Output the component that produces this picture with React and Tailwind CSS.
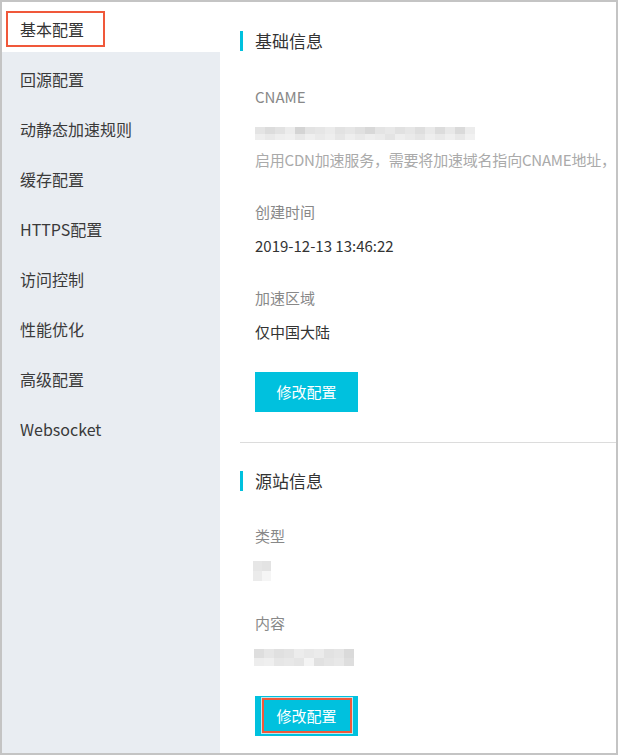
import React from 'react';

const menu = ['基本配置', '回源配置', '动静态加速规则', '缓存配置', 'HTTPS配置', '访问控制', '性能优化', '高级配置', 'Websocket'];

// mosaic placeholder for the masked values
const cname = [
  ['#e4e4e4', '#dcdcdc', '#e2e2e2', '#ececec', '#d4d4d4', '#e3e3e3', '#e6e6e6', '#ebebeb', '#e2e2e2', '#e6e6e6', '#e0e0e0', '#d8d8d8', '#e4e4e4', '#e8e8e8', '#e1e1e1', '#e6e6e6', '#dedede', '#e9e9e9', '#dcdcdc', '#e8e8e8', '#dadada', '#ececec'],
  ['#eeeeee', '#e9e9e9', '#eeeeee', '#f0f0f0', '#e8e8e8', '#efefef', '#eaeaea', '#eeeeee', '#e6e6e6', '#eeeeee', '#e9e9e9', '#eeeeee', '#ebebeb', '#e4e4e4', '#eeeeee', '#eaeaea', '#e5e5e5', '#eeeeee', '#e9e9e9', '#efefef', '#e8e8e8', '#f1f1f1'],
];
const kind = [
  ['#e6e6e6', '#e3e3e3'],
  ['#ebebeb', '#f5f5f5'],
];
const content = [
  ['#dedede', '#e6e6e6', '#e0e0e0', '#e3e3e3', '#ececec', '#e8e8e8', '#ebebeb', '#e2e2e2', '#e5e5e5', '#dadada'],
  ['#ededed', '#efefef', '#e6e6e6', '#e8e8e8', '#e5e5e5', '#f4f4f4', '#e1e1e1', '#e5e5e5', '#e8e8e8', '#dedede'],
];

const Mosaic = ({ rows, cell, rowH }) => (
  <div className="flex flex-col">
    {rows.map((r, i) => (
      <div key={i} className="flex">
        {r.map((c, j) => (
          <div key={j} style={{ width: cell, height: rowH[i], background: c }} />
        ))}
      </div>
    ))}
  </div>
);

const SectionTitle = ({ children, className }) => (
  <div className={'flex items-center h-[20px] ' + className}>
    <div className="w-[3px] h-[20px] bg-[#00c1de]" />
    <span className="ml-[12px] text-[17px] leading-[20px] text-[#333]">{children}</span>
  </div>
);

const Label = ({ children, className }) => (
  <div className={'pl-[15px] text-[15px] leading-[20px] text-[#888] ' + className}>{children}</div>
);

const Value = ({ children, className }) => (
  <div className={'pl-[15px] text-[15px] leading-[20px] text-[#333] ' + className}>{children}</div>
);

export default function App() {
  return (
    <div
      className="w-[618px] h-[755px] flex border-2 border-[#c4c4c4] bg-white overflow-hidden"
      style={{ fontFamily: '"Noto Sans CJK SC", "Noto Sans", sans-serif' }}
    >
      {/* left menu */}
      <div className="w-[218px] shrink-0 bg-[#e9edf2] flex flex-col">
        {menu.map((m, i) =>
          i === 0 ? (
            <div key={m} className="h-[50px] bg-white flex items-center pt-[4px] pl-[4px]">
              <div className="h-[36px] w-[99px] border-[2.5px] border-[#f0583a] flex items-center pl-[12px] text-[16px] text-[#333]">
                {m}
              </div>
            </div>
          ) : (
            <div key={m} className="h-[50px] flex items-center pt-[3px] pl-[18px] text-[16px] text-[#3a3a3a]">
              {m}
            </div>
          )
        )}
      </div>

      {/* main */}
      <div className="flex-1 min-w-0 pl-[20px] flex flex-col overflow-hidden whitespace-nowrap">
        <SectionTitle className="mt-[29px]">基础信息</SectionTitle>
        <Label className="mt-[36px]">CNAME</Label>
        <div className="pl-[15px] mt-[20px]">
          <Mosaic rows={cname} cell={10} rowH={[7, 6]} />
        </div>
        <div className="pl-[15px] mt-[10px] text-[15px] leading-[20px] tracking-[-0.2px] text-[#aaa]">
          启用CDN加速服务，需要将加速域名指向CNAME地址，
        </div>
        <Label className="mt-[32px]">创建时间</Label>
        <Value className="mt-[14px]">2019-12-13 13:46:22</Value>
        <Label className="mt-[32px]">加速区域</Label>
        <Value className="mt-[14px]">仅中国大陆</Value>
        <div className="pl-[15px] mt-[30px]">
          <button className="w-[103px] h-[40px] bg-[#00c1de] text-white text-[15px]">修改配置</button>
        </div>
        <div className="mt-[30px] h-px bg-[#dcdcdc]" />

        <SectionTitle className="mt-[28px]">源站信息</SectionTitle>
        <Label className="mt-[35px]">类型</Label>
        <div className="pl-[13px] mt-[15px]">
          <Mosaic rows={kind} cell={9} rowH={[10, 10]} />
        </div>
        <Label className="mt-[32px]">内容</Label>
        <div className="pl-[14px] mt-[16px]">
          <Mosaic rows={content} cell={10} rowH={[9, 8]} />
        </div>
        <div className="pl-[15px] mt-[30px]">
          <button className="relative w-[103px] h-[40px] bg-[#00c1de] text-white text-[15px]">
            修改配置
            <span className="absolute left-[7px] top-[2px] w-[90px] h-[35px] border-[2.5px] border-[#f0583a] outline outline-1 outline-[#b9e6ee]" />
          </button>
        </div>
      </div>
    </div>
  );
}
